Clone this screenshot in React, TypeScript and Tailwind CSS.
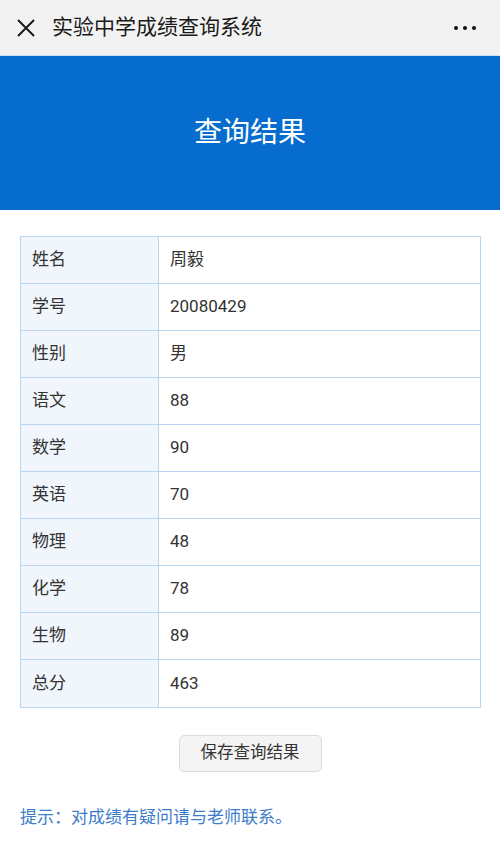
import React from "react";

const rows: [string, string][] = [
  ["姓名", "周毅"],
  ["学号", "20080429"],
  ["性别", "男"],
  ["语文", "88"],
  ["数学", "90"],
  ["英语", "70"],
  ["物理", "48"],
  ["化学", "78"],
  ["生物", "89"],
  ["总分", "463"],
];

export default function App() {
  return (
    <div
      className="w-[500px] h-[848px] bg-white flex flex-col"
      style={{ fontFamily: 'Roboto, "Noto Sans CJK SC", sans-serif' }}
    >
      <div className="h-[56px] bg-[#f2f2f2] flex items-center pl-[16px] pr-[24px] border-b border-[#cfe0f2]">
        <svg width="20" height="20" viewBox="0 0 20 20" className="shrink-0">
          <path d="M2 2 L18 18 M18 2 L2 18" stroke="#1a1a1a" strokeWidth="2" />
        </svg>
        <div className="ml-[16px] text-[21px] text-[#1a1a1a] leading-none">实验中学成绩查询系统</div>
        <div className="ml-auto flex gap-[5px] items-center">
          <div className="w-[4px] h-[4px] rounded-full bg-[#111]" />
          <div className="w-[4px] h-[4px] rounded-full bg-[#111]" />
          <div className="w-[4px] h-[4px] rounded-full bg-[#111]" />
        </div>
      </div>
      <div className="h-[154px] bg-[#066ccd] flex items-center justify-center">
        <div className="text-white text-[28px] leading-none">查询结果</div>
      </div>
      <div className="px-[20px] pt-[26px]">
        <div className="border border-[#b8d6f2] w-[461px]">
          {rows.map(([k, v], i) => (
            <div
              key={k}
              className={
                "flex h-[47px] " + (i < rows.length - 1 ? "border-b border-[#b8d6f2]" : "")
              }
            >
              <div className="w-[138px] bg-[#f0f6fc] border-r border-[#b8d6f2] flex items-center pl-[11px] text-[17px] text-[#333]">
                {k}
              </div>
              <div className="flex-1 flex items-center pl-[11px] text-[17px] text-[#333]">{v}</div>
            </div>
          ))}
        </div>
      </div>
      <div className="flex justify-center mt-[27px]">
        <div className="w-[143px] h-[37px] bg-[#f4f4f4] border border-[#dcdcdc] rounded-[5px] flex items-center justify-center text-[16.5px] text-[#333]">
          保存查询结果
        </div>
      </div>
      <div className="px-[20px] mt-[33px] text-[17px] text-[#3b7ccb]">提示：对成绩有疑问请与老师联系。</div>
    </div>
  );
}
